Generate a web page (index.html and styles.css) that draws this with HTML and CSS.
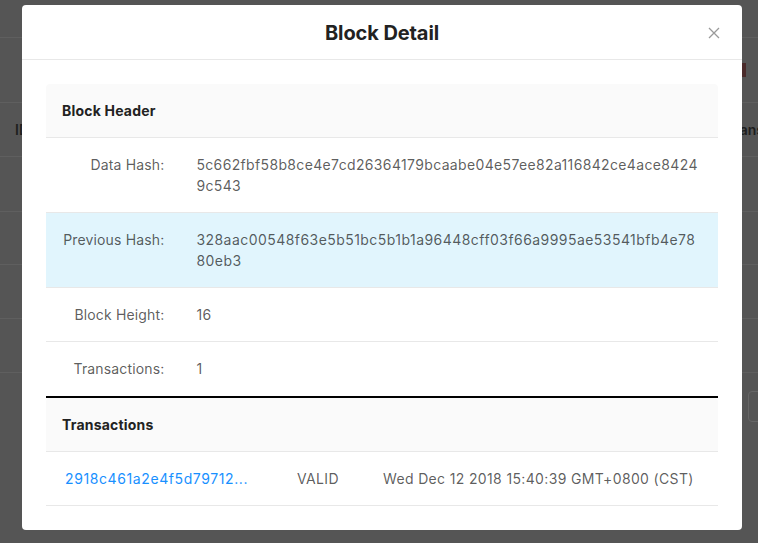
FILE: index.html
```html
<!DOCTYPE html>
<html lang="en">
<head>
<meta charset="utf-8">
<title>Block Detail</title>
<link rel="stylesheet" href="styles.css">
</head>
<body>
<div class="page">
  <div class="bg-row bg-r1"></div>
  <div class="bg-row bg-r2"><span class="bg-mark"></span></div>
  <div class="bg-row bg-r3"><span class="bg-text">ID</span><span class="bg-text">Transa</span></div>
  <div class="bg-row bg-r4"></div>
  <div class="bg-row bg-r5"></div>
  <div class="bg-row bg-r6"></div>
  <div class="bg-row bg-r7"></div>
  <div class="bg-pager"><span class="bg-btn"></span></div>
</div>

<div class="modal">
  <div class="modal-header">
    <span></span>
    <h2 class="modal-title">Block Detail</h2>
    <button class="modal-close" aria-label="Close">
      <svg width="12" height="12" viewBox="0 0 12 12"><path d="M1 1L11 11M11 1L1 11" stroke="#9a9a9a" stroke-width="1.3" fill="none"/></svg>
    </button>
  </div>
  <div class="modal-body">
    <div class="section">
      <div class="section-title">Block Header</div>
      <div class="kv-row">
        <div class="kv-key">Data Hash:</div>
        <div class="kv-val">5c662fbf58b8ce4e7cd26364179bcaabe04e57ee82a116842ce4ace84249c543</div>
      </div>
      <div class="kv-row kv-row-hl">
        <div class="kv-key">Previous Hash:</div>
        <div class="kv-val">328aac00548f63e5b51bc5b1b1a96448cff03f66a9995ae53541bfb4e7880eb3</div>
      </div>
      <div class="kv-row">
        <div class="kv-key">Block Height:</div>
        <div class="kv-val">16</div>
      </div>
      <div class="kv-row kv-row-last">
        <div class="kv-key">Transactions:</div>
        <div class="kv-val">1</div>
      </div>
    </div>
    <div class="section">
      <div class="section-title">Transactions</div>
      <div class="tx-row">
        <a class="tx-link" href="#">2918c461a2e4f5d79712...</a>
        <span class="tx-cell">VALID</span>
        <span class="tx-cell">Wed Dec 12 2018 15:40:39 GMT+0800 (CST)</span>
      </div>
    </div>
  </div>
</div>
</body>
</html>
```

FILE: styles.css
```css
* { box-sizing: border-box; }
html, body { margin: 0; padding: 0; }
body {
  background: #555555;
  font-family: Inter, "Noto Sans", "Liberation Sans", sans-serif;
  font-size: 14px;
  width: 758px;
  height: 543px;
  overflow: hidden;
}

/* dimmed page behind the modal */
.page { display: flex; flex-direction: column; }
.bg-row { border-bottom: 1px solid #5f5f5f; display: flex; align-items: center; justify-content: space-between; }
.bg-r1 { height: 38px; }
.bg-r2 { height: 65px; justify-content: flex-end; }
.bg-r3 { height: 54px; padding: 0 0 0 15px; }
.bg-r4 { height: 55px; }
.bg-r5 { height: 53px; }
.bg-r6 { height: 54px; }
.bg-r7 { height: 54px; }
.bg-text { color: #1e1e1e; font-weight: 600; font-size: 14px; }
.bg-text:last-child { margin-right: -14px; }
.bg-mark { width: 4px; height: 14px; background: #4a2a2a; margin-right: 12px; }
.bg-pager { display: flex; justify-content: flex-end; padding-top: 18px; }
.bg-btn { width: 32px; height: 31px; border: 1px solid #666; border-radius: 4px; margin-right: -22px; }

/* modal */
.modal {
  position: absolute;
  top: 5px;
  left: 22px;
  width: 720px;
  height: 525px;
  background: #fff;
  border-radius: 4px;
}
.modal-header {
  height: 55px;
  border-bottom: 1px solid #e8e8e8;
  display: grid;
  grid-template-columns: 1fr auto 1fr;
  align-items: center;
  padding-top: 1px;
}
.modal-title {
  margin: 0;
  font-size: 20px;
  font-weight: 700;
  color: #222;
  letter-spacing: -0.1px;
}
.modal-close {
  justify-self: end;
  margin-right: 22px;
  background: none;
  border: 0;
  padding: 0;
  width: 12px;
  height: 12px;
  display: flex;
  cursor: pointer;
}
.modal-body { padding: 24px; }

.section-title {
  background: #fafafa;
  padding: 16px;
  line-height: 21px;
  font-weight: 700;
  color: #222;
  letter-spacing: 0.2px;
  border-bottom: 1px solid #e8e8e8;
  border-radius: 4px 4px 0 0;
}
.kv-row {
  display: grid;
  grid-template-columns: 20% 1fr;
  border-bottom: 1px solid #e8e8e8;
  line-height: 21px;
  color: rgba(0, 0, 0, 0.65);
}
.kv-row-hl { background: #e1f5fd; }
.kv-row-last { border-bottom: 2px solid #000; }
.kv-row-last .kv-key, .kv-row-last .kv-val { padding-bottom: 17px; }
.kv-key { padding: 16px; text-align: right; white-space: nowrap; letter-spacing: 0.15px; }
.kv-val { padding: 16px; word-break: break-all; letter-spacing: 0.35px; }
.kv-row-hl .kv-val { letter-spacing: 0.45px; }

.tx-row {
  display: grid;
  grid-template-columns: 235px 86px 1fr;
  border-bottom: 1px solid #e8e8e8;
  line-height: 21px;
  letter-spacing: 0.35px;
  color: rgba(0, 0, 0, 0.65);
}
.tx-link { padding: 16px 16px 16px 19px; color: #1890ff; text-decoration: none; letter-spacing: 0.6px; }
.tx-cell { padding: 16px; }
```
